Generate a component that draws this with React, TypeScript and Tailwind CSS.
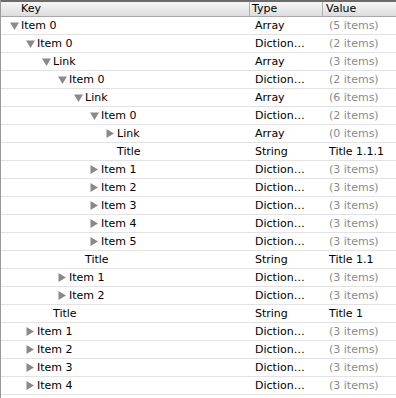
const ROWS: Array<{ key: string; level: number; state: "open" | "closed" | "leaf"; type: string; value: string }> = [
  { key: "Item 0", level: 0, state: "open", type: "Array", value: "(5 items)" },
  { key: "Item 0", level: 1, state: "open", type: "Diction…", value: "(2 items)" },
  { key: "Link", level: 2, state: "open", type: "Array", value: "(3 items)" },
  { key: "Item 0", level: 3, state: "open", type: "Diction…", value: "(2 items)" },
  { key: "Link", level: 4, state: "open", type: "Array", value: "(6 items)" },
  { key: "Item 0", level: 5, state: "open", type: "Diction…", value: "(2 items)" },
  { key: "Link", level: 6, state: "closed", type: "Array", value: "(0 items)" },
  { key: "Title", level: 6, state: "leaf", type: "String", value: "Title 1.1.1" },
  { key: "Item 1", level: 5, state: "closed", type: "Diction…", value: "(3 items)" },
  { key: "Item 2", level: 5, state: "closed", type: "Diction…", value: "(3 items)" },
  { key: "Item 3", level: 5, state: "closed", type: "Diction…", value: "(3 items)" },
  { key: "Item 4", level: 5, state: "closed", type: "Diction…", value: "(3 items)" },
  { key: "Item 5", level: 5, state: "closed", type: "Diction…", value: "(3 items)" },
  { key: "Title", level: 4, state: "leaf", type: "String", value: "Title 1.1" },
  { key: "Item 1", level: 3, state: "closed", type: "Diction…", value: "(3 items)" },
  { key: "Item 2", level: 3, state: "closed", type: "Diction…", value: "(3 items)" },
  { key: "Title", level: 2, state: "leaf", type: "String", value: "Title 1" },
  { key: "Item 1", level: 1, state: "closed", type: "Diction…", value: "(3 items)" },
  { key: "Item 2", level: 1, state: "closed", type: "Diction…", value: "(3 items)" },
  { key: "Item 3", level: 1, state: "closed", type: "Diction…", value: "(3 items)" },
  { key: "Item 4", level: 1, state: "closed", type: "Diction…", value: "(3 items)" },
];

function Disclosure({ state }: { state: "open" | "closed" | "leaf" }) {
  if (state === "leaf") return <span className="w-[10px] shrink-0" />;
  return (
    <span className="w-[10px] shrink-0 flex items-center">
      {state === "open" ? (
        <svg width="9" height="8" viewBox="0 0 9 8">
          <polygon points="0,0.5 9,0.5 4.5,8" fill="#8a8a8a" />
        </svg>
      ) : (
        <svg width="8" height="9" viewBox="0 0 8 9">
          <polygon points="0.5,0 8,4.5 0.5,9" fill="#8a8a8a" />
        </svg>
      )}
    </span>
  );
}

export default function App() {
  return (
    <div
      className="w-[396px] h-[398px] bg-white overflow-hidden border-l border-[#9a9a9a] text-[11px] text-black"
      style={{ fontFamily: "'DejaVu Sans', 'Liberation Sans', sans-serif" }}
    >
      <div className="grid grid-cols-[249px_73px_1fr] h-[17px] border-t-2 border-t-[#6b6b6b] border-b border-b-[#a8a8a8] bg-gradient-to-b from-[#f7f7f7] to-[#dcdcdc] leading-[14px]">
        <div className="pl-[20px] border-r border-[#b0b0b0]">Key</div>
        <div className="pl-[2px] border-r border-[#b0b0b0]">Type</div>
        <div className="pl-[3px]">Value</div>
      </div>
      {ROWS.map((r, i) => (
        <div key={i} className="grid grid-cols-[250px_73px_1fr] h-[18px] border-b border-[#e2e2e2] items-center leading-[17px]">
          <div className="flex items-center" style={{ paddingLeft: 9 + r.level * 16 }}>
            <Disclosure state={r.state} />
            <span className="pl-[1px]">{r.key}</span>
          </div>
          <div className="pl-[4px]">{r.type}</div>
          <div className={r.value.startsWith("(") ? "pl-[5px] text-[#8a8a8a]" : "pl-[5px]"}>{r.value}</div>
        </div>
      ))}
    </div>
  );
}
